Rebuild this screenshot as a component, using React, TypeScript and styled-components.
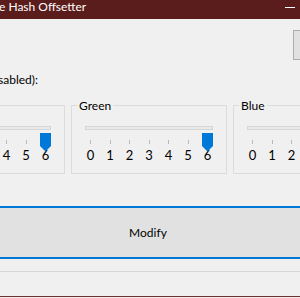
import React from "react";
import styled, { createGlobalStyle } from "styled-components";

const GlobalStyle = createGlobalStyle`
    html,
    body {
        margin: 0;
        padding: 0;
        background: #f0f0f0;
        overflow: hidden;
    }
`;

const Window = styled.div`
    width: 300px;
    height: 297px;
    box-sizing: border-box;
    display: flex;
    flex-direction: column;
    overflow: hidden;
    border-bottom: 1px solid #6a3333;
    font-family: "Segoe UI", Lato, "Noto Sans", sans-serif;
    font-size: 12px;
    color: #000;
`;

const TitleBar = styled.div`
    height: 19px;
    flex-shrink: 0;
    display: flex;
    justify-content: space-between;
    align-items: flex-start;
    background: #5b1c1c;
    color: #fff;
`;

const Title = styled.span`
    margin: 0 0 0 -1px;
    font-size: 12px;
    line-height: 14px;
    white-space: nowrap;
`;

const MinimizeGlyph = styled.span`
    width: 10px;
    height: 1px;
    margin: 7px 5px 0 0;
    background: #fff;
`;

const Body = styled.div`
    flex: 1;
    display: flex;
    flex-direction: column;
`;

const TopRow = styled.div`
    height: 30px;
    margin-top: 11px;
    display: flex;
    justify-content: flex-end;
`;

const SideButton = styled.div`
    width: 75px;
    flex-shrink: 0;
    margin-right: -68px;
    box-sizing: border-box;
    border: 1px solid #adadad;
    background: #e1e1e1;
`;

const HintLabel = styled.div`
    margin: 12px 0 0 -2px;
    line-height: 15px;
    white-space: nowrap;
`;

const GroupRow = styled.div`
    display: flex;
    gap: 6px;
    margin: 11px 0 0 -91px;
`;

const Group = styled.fieldset`
    width: 156px;
    height: 76px;
    min-width: 0;
    flex-shrink: 0;
    box-sizing: border-box;
    margin: 0;
    padding: 0;
    border: 1px solid #dcdcdc;
`;

const Legend = styled.legend`
    margin-left: 5px;
    padding: 0 2px;
    line-height: 15px;
    font-size: 12px;
`;

const Slider = styled.div`
    position: relative;
`;

const Track = styled.div`
    width: 128px;
    height: 4px;
    margin: 13px 0 0 13px;
    box-sizing: border-box;
    border: 1px solid #d6d6d6;
    background: #e7eaea;
`;

const Thumb = styled.svg`
    position: absolute;
    top: 7px;
    width: 11px;
    height: 19px;
`;

const Scale = styled.div`
    display: grid;
    grid-template-columns: repeat(7, 19.5px);
    margin: 10px 0 0 8.75px;
`;

const Step = styled.div`
    display: flex;
    flex-direction: column;
    align-items: center;
`;

const Tick = styled.span`
    width: 1px;
    height: 4px;
    background: #b9b9b9;
`;

const StepLabel = styled.span`
    margin-top: 3px;
    font-size: 13px;
    line-height: 16px;
`;

const ModifyButton = styled.div`
    height: 53px;
    margin: 32px -10px 0 -14px;
    box-sizing: border-box;
    display: flex;
    align-items: center;
    justify-content: center;
    border: 2px solid #0078d7;
    background: #e1e1e1;
`;

const StatusStrip = styled.div`
    flex: 1;
    margin-top: 12px;
    border-top: 1px solid #d7d7d7;
`;

const STEPS = [0, 1, 2, 3, 4, 5, 6];
const STEP_WIDTH = 19.5;

const channels = [
    { name: "Red", value: 6 },
    { name: "Green", value: 6 },
    { name: "Blue", value: 6 },
];

const ChannelSlider: React.FC<{ name: string; value: number }> = ({ name, value }) => {
    const thumbLeft = 18.5 + value * STEP_WIDTH - 5.5;

    return (
        <Group>
            <Legend>{name}</Legend>
            <Slider>
                <Track />
                <Thumb viewBox="0 0 11 19" style={{ left: thumbLeft }}>
                    <path d="M0 0H11V13L5.5 18.5L0 13Z" fill="#0078d7" />
                </Thumb>
                <Scale>
                    {STEPS.map(step => (
                        <Step key={step}>
                            <Tick />
                            <StepLabel>{step}</StepLabel>
                        </Step>
                    ))}
                </Scale>
            </Slider>
        </Group>
    );
};

export default function App() {
    return (
        <>
            <GlobalStyle />
            <Window>
                <TitleBar>
                    <Title>e Hash Offsetter</Title>
                    <MinimizeGlyph />
                </TitleBar>
                <Body>
                    <TopRow>
                        <SideButton />
                    </TopRow>
                    <HintLabel>sabled):</HintLabel>
                    <GroupRow>
                        {channels.map(c => (
                            <ChannelSlider key={c.name} name={c.name} value={c.value} />
                        ))}
                    </GroupRow>
                    <ModifyButton>Modify</ModifyButton>
                    <StatusStrip />
                </Body>
            </Window>
        </>
    );
}
